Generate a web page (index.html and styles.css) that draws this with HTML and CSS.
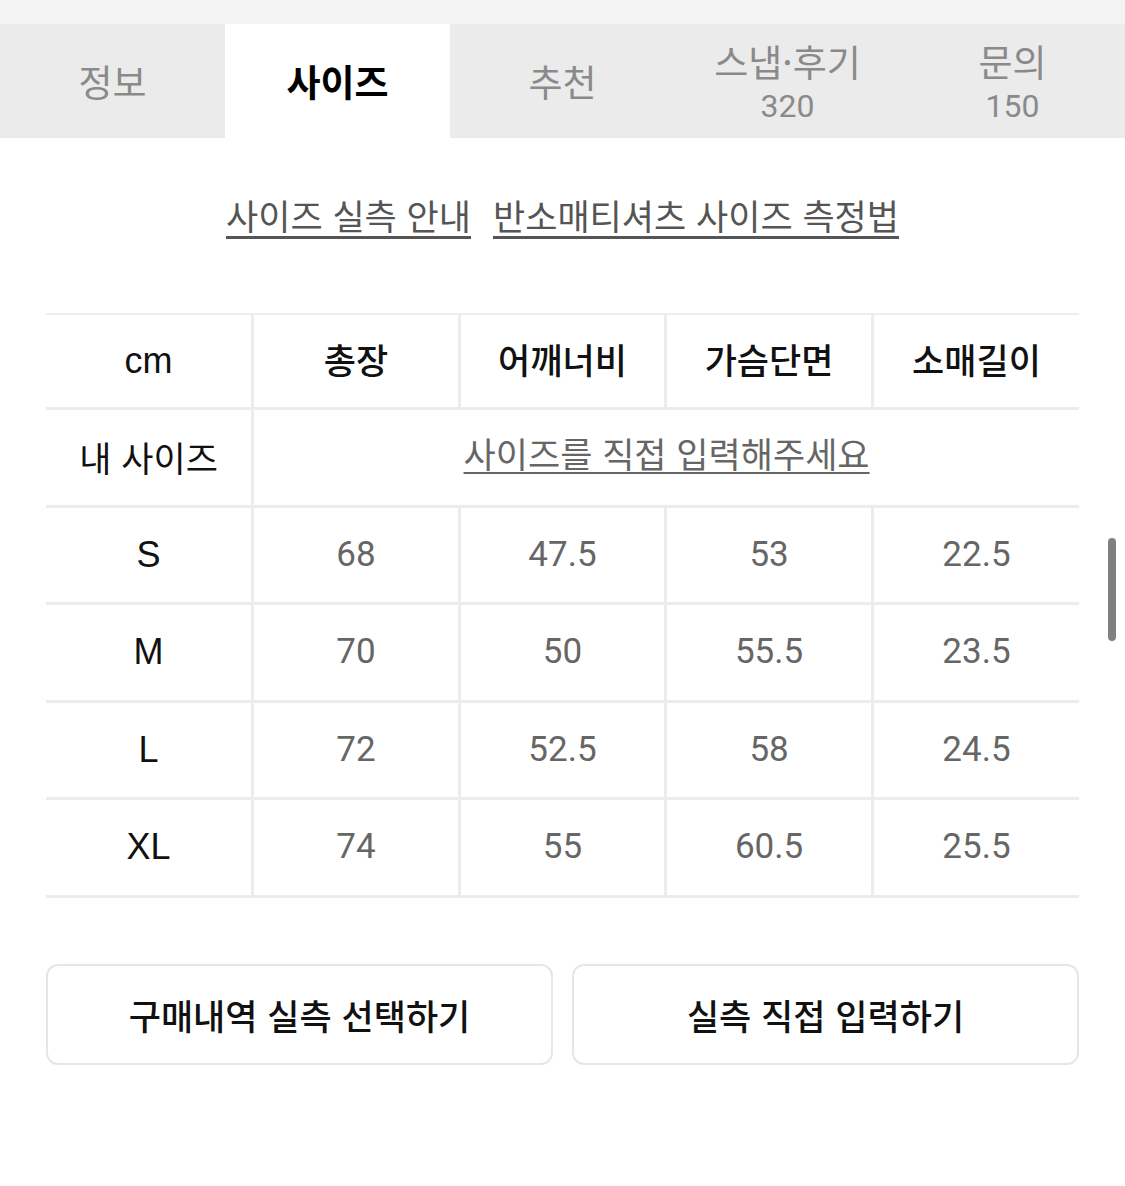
FILE: index.html
```html
<!DOCTYPE html>
<html lang="ko">
<head>
  <meta charset="UTF-8" />
  <title>사이즈</title>
  <link rel="stylesheet" href="styles.css">
</head>
<body>
  <div class="top-strip"></div>

  <nav class="tabs">
    <div class="tab"><span class="tab-label">정보</span></div>
    <div class="tab active"><span class="tab-label">사이즈</span></div>
    <div class="tab"><span class="tab-label">추천</span></div>
    <div class="tab"><span class="tab-label">스냅·후기</span><span class="tab-count">320</span></div>
    <div class="tab"><span class="tab-label">문의</span><span class="tab-count">150</span></div>
  </nav>

  <div class="guide-links">
    <a class="guide-link">사이즈 실측 안내</a>
    <a class="guide-link">반소매티셔츠 사이즈 측정법</a>
  </div>

  <table class="size-table">
    <tr class="head-row">
      <th class="unit">cm</th>
      <th>총장</th>
      <th>어깨너비</th>
      <th>가슴단면</th>
      <th>소매길이</th>
    </tr>
    <tr>
      <th class="label">내 사이즈</th>
      <td colspan="4" class="my-size"><span>사이즈를 직접 입력해주세요</span></td>
    </tr>
    <tr>
      <th class="unit">S</th>
      <td>68</td><td>47.5</td><td>53</td><td>22.5</td>
    </tr>
    <tr>
      <th class="unit">M</th>
      <td>70</td><td>50</td><td>55.5</td><td>23.5</td>
    </tr>
    <tr>
      <th class="unit">L</th>
      <td>72</td><td>52.5</td><td>58</td><td>24.5</td>
    </tr>
    <tr>
      <th class="unit">XL</th>
      <td>74</td><td>55</td><td>60.5</td><td>25.5</td>
    </tr>
  </table>

  <div class="actions">
    <button class="action-btn">구매내역 실측 선택하기</button>
    <button class="action-btn">실측 직접 입력하기</button>
  </div>

  <div class="scrollbar"></div>
</body>
</html>
```

FILE: styles.css
```css
body {
  margin: 0;
  background: #fff;
  font-family: "Noto Sans CJK KR", sans-serif;
  color: #111;
  position: relative;
  min-height: 1186px;
}
.top-strip {
  height: 24px;
  background: #f4f4f4;
}
.tabs {
  display: flex;
  height: 114px;
}
.tab {
  flex: 1;
  background: #ebebeb;
  display: flex;
  flex-direction: column;
  align-items: center;
  justify-content: center;
  color: #8a8a8a;
}
.tab.active {
  background: #fff;
  color: #000;
}
.tab-label {
  font-size: 37px;
  line-height: 42px;
}
.tab.active .tab-label {
  font-weight: 700;
}
.tab-count {
  font-family: Roboto, sans-serif;
  font-size: 32px;
  line-height: 32px;
  margin-top: 8px;
}
.guide-links {
  height: 175px;
  display: flex;
  justify-content: center;
  align-items: center;
  gap: 22px;
  padding-bottom: 22px;
  box-sizing: border-box;
}
.guide-link {
  font-size: 35px;
  line-height: 42px;
  color: #555;
  text-decoration: underline;
  text-decoration-thickness: 3px;
  text-underline-offset: 6px;
}
.size-table {
  margin: 0 46px;
  width: 1033px;
  border-collapse: collapse;
  table-layout: fixed;
  border-top: 2px solid #ededed;
}
.size-table th,
.size-table td {
  height: 94.5px;
  padding: 0;
  text-align: center;
  line-height: 40px;
  border-bottom: 3px solid #ececec;
  border-left: 3px solid #ececec;
}
.size-table tr > :first-child {
  border-left: none;
}
.size-table th {
  font-weight: 500;
  font-size: 35px;
  color: #111;
}
.head-row th {
  height: 88px;
  padding-bottom: 4px;
}
.head-row th.unit {
  height: 92px;
  padding-bottom: 0;
}
.size-table th.unit {
  font-family: "Liberation Sans", Arial, sans-serif;
  font-weight: 400;
  font-size: 36px;
}
.size-table th.label {
  font-weight: 400;
}
.size-table td {
  font-family: Roboto, sans-serif;
  font-size: 35px;
  color: #666;
}
.size-table td.my-size span {
  font-family: "Noto Sans CJK KR", sans-serif;
  font-size: 35px;
  color: #666;
  text-decoration: underline;
  text-decoration-thickness: 2px;
  text-underline-offset: 4px;
  position: relative;
  top: -2px;
}
.actions {
  display: flex;
  gap: 19px;
  margin: 66px 46px 0 46px;
}
.action-btn {
  flex: 1;
  height: 101px;
  background: #fff;
  border: 2px solid #e6e6e6;
  border-radius: 12px;
  font-family: "Noto Sans CJK KR", sans-serif;
  font-size: 35px;
  font-weight: 500;
  color: #111;
}
.scrollbar {
  position: absolute;
  left: 1108px;
  top: 538px;
  width: 8px;
  height: 103px;
  border-radius: 4px;
  background: #808080;
}
```
